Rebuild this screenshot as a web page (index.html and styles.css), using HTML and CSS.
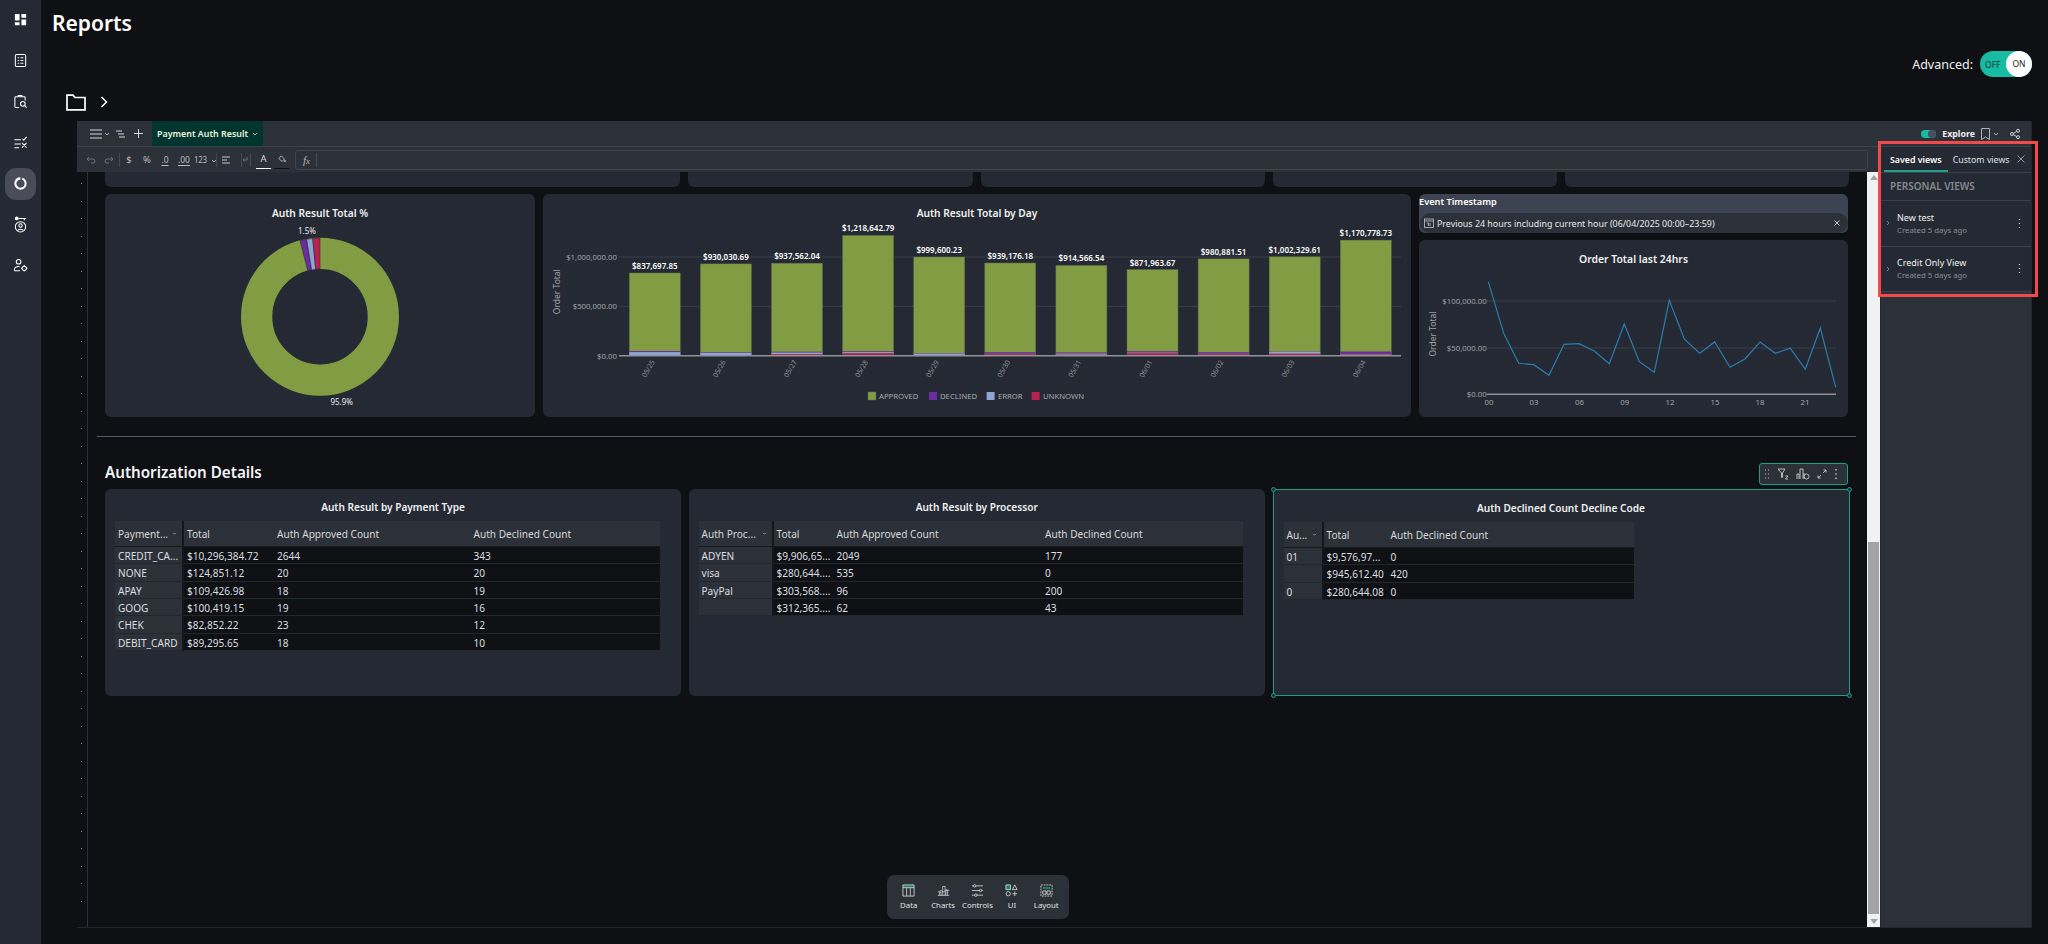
FILE: index.html
```html
<!DOCTYPE html>
<html lang="en">
<head>
<meta charset="utf-8">
<title>Reports</title>
<link rel="stylesheet" href="styles.css">
</head>
<body>
<aside class="sidebar">
  <div class="nav-item"><svg class="nav-icon" viewBox="0 0 16 16"><path class="fill" d="M2 2h5v7H2zM9 2h5v4H9zM9 8h5v6H9zM2 11h5v3H2z"/></svg></div>
  <div class="nav-item"><svg class="nav-icon" viewBox="0 0 16 16"><rect class="ln" x="2.5" y="1.5" width="11" height="13" rx="1.5"/><path class="ln" d="M5 5h1.5M8 5h3M5 8h1.5M8 8h3M5 11h1.5M8 11h3"/></svg></div>
  <div class="nav-item"><svg class="nav-icon" viewBox="0 0 16 16"><path class="ln" d="M6.5 14.5H3a1 1 0 0 1-1-1V4a1 1 0 0 1 1-1h9a1 1 0 0 1 1 1v3M5.5 3V1.500h4V3"/><circle class="ln" cx="10.500" cy="10.500" r="2.500"/><path class="ln" d="M12.500 12.500l2 2"/></svg></div>
  <div class="nav-item"><svg class="nav-icon" viewBox="0 0 16 16"><path class="ln" d="M1.500 5h7M1.500 9.500h7M1.500 13.500h5M10 4l1.500 1.500L14.500 2M9.500 8.500l5 5M14.500 8.500l-5 5"/></svg></div>
  <div class="nav-item active"><svg class="nav-icon" viewBox="0 0 16 16"><circle class="ring" cx="8" cy="8" r="5.500" pathLength="100" transform="rotate(-70 8 8)"/></svg></div>
  <div class="nav-item"><svg class="nav-icon tall" viewBox="0 0 16 18"><circle class="fill" cx="4" cy="2.500" r="2"/><path class="ln" d="M6 2.500h8M12 2.500v2"/><circle class="ln" cx="8" cy="11.500" r="5.500"/><circle class="ln" cx="8" cy="10" r="1.800"/><path class="ln" d="M5 15.500c.5-2 5.500-2 6 0"/></svg></div>
  <div class="nav-item"><svg class="nav-icon" viewBox="0 0 16 16"><circle class="ln" cx="6" cy="4" r="2.500"/><path class="ln" d="M1.500 13.500v-1c0-2 2-3.500 4.500-3.500h1M1.500 13.500h6"/><circle class="ln" cx="12" cy="11" r="2.300"/><path class="ln" d="M12 7.500v1.200M12 13.300v1.200M8.500 11h1.200M14.300 11h1.200"/></svg></div>
</aside>

<main class="main">
  <h1 class="page-title">Reports</h1>
  <div class="advanced-row">
    <span class="advanced-label">Advanced:</span>
    <div class="switch"><span class="switch-off">OFF</span><span class="switch-on">ON</span></div>
  </div>
  <div class="breadcrumb">
    <svg class="folder" viewBox="0 0 20 17"><path d="M1 15.800V1.200h6l2 2.300h10v12.300z"/></svg>
    <svg class="crumb-chevron" viewBox="0 0 8 12"><path d="M1.500 1l5 5-5 5"/></svg>
  </div>

  <section class="frame">
    <header class="toolbar-top">
      <div class="top-left">
        <svg class="ti ti-burger" viewBox="0 0 12 10"><path d="M0 1h12M0 5h12M0 9h12"/></svg>
        <svg class="ti ti-chev" viewBox="0 0 6 4"><path d="M1 1l2 2 2-2"/></svg>
        <svg class="ti ti-indent" viewBox="0 0 9 8"><path d="M0 1h6M2 4h6M3 7h6"/></svg>
        <svg class="ti ti-plus" viewBox="0 0 9 9"><path d="M4.500 0v9M0 4.500h9"/></svg>
        <div class="tab"><span>Payment Auth Result</span><svg class="ti ti-chev" viewBox="0 0 6 4"><path d="M1 1l2 2 2-2"/></svg></div>
      </div>
      <div class="top-right">
        <span class="mini-toggle"><span class="mini-knob"></span></span>
        <span class="explore">Explore</span>
        <svg class="ti ti-bookmark" viewBox="0 0 9 12"><path d="M.5.500h8v11L4.500 9l-4 2.500z"/></svg>
        <svg class="ti ti-chev" viewBox="0 0 6 4"><path d="M1 1l2 2 2-2"/></svg>
        <svg class="ti ti-share" viewBox="0 0 10 10"><circle cx="2" cy="5" r="1.500"/><circle cx="8" cy="1.800" r="1.500"/><circle cx="8" cy="8.200" r="1.500"/><path d="M3.500 4.300L6.600 2.500M3.500 5.700l3.100 1.800"/></svg>
      </div>
    </header>

    <div class="frame-body">
      <div class="work">
        <div class="toolbar-format">
          <svg class="fi" viewBox="0 0 10 8"><path d="M3 1L1 3l2 2M1 3h6a2 2 0 0 1 0 4H5"/></svg>
          <svg class="fi" viewBox="0 0 10 8"><path d="M7 1l2 2-2 2M9 3H3a2 2 0 0 0 0 4h2"/></svg>
          <i class="sep"></i>
          <span class="ft">$</span><span class="ft">%</span>
          <span class="ft ft-u">.0</span><span class="ft ft-u">.00</span>
          <span class="ft ft-num">123 <svg class="ti ti-chev" viewBox="0 0 6 4"><path d="M1 1l2 2 2-2"/></svg></span>
          <i class="sep"></i>
          <svg class="fi light fi-align" viewBox="0 0 10 8"><path d="M0 1h8M0 4h5M0 7h8"/></svg>
          <i class="sep"></i>
          <svg class="fi narrow" viewBox="0 0 6 8"><path d="M5 1v3H1l1.500-1.500M1 4l1.500 1.500"/></svg>
          <i class="sep"></i>
          <span class="ft ft-a">A</span>
          <span class="ft ft-fill"><svg class="fi light" viewBox="0 0 10 10"><path d="M4 1l4 4-3 3-4-3.500z"/><circle cx="8.500" cy="7.500" r="1"/></svg></span>
          <div class="formula"><span class="fx">f<small>x</small></span><i class="sep"></i></div>
        </div>

        <div class="canvas-wrap">
          <div class="ruler">
            <i></i><i></i><i></i><i></i><i></i><i></i><i></i><i></i><i></i><i></i><i></i><i></i><i></i><i></i><i></i><i></i><i></i><i></i><i></i><i></i><i></i><i></i><i></i><i></i><i></i><i></i><i></i><i></i><i></i><i></i><i></i><i></i><i></i><i></i><i></i><i></i><i></i><i></i><i></i><i></i><i></i><i></i>
          </div>
          <div class="canvas">
            <div class="row-clip">
              <div class="card"></div><div class="card"></div><div class="card"></div><div class="card"></div><div class="card"></div>
            </div>

            <div class="row-charts">
              <article class="card">
                <h3 class="card-title">Auth Result Total %</h3>
                <svg class="chart" viewBox="105 232 430 185">
                  <circle class="slice-a" cx="320" cy="316.700" r="63.350"/>
                  <polygon class="slice slice-d" points="300,240.500 306.700,239.300 311.700,270 307.700,270.700"/>
                  <polygon class="slice slice-e" points="306.700,239.300 312.700,238.500 315.700,269.300 311.700,270"/>
                  <polygon class="slice slice-u" points="312.700,238.500 320,238 320,269 315.700,269.300"/>
                  <text class="pct" x="307" y="234">1.5%</text>
                  <text class="pct" x="341.700" y="405">95.9%</text>
                </svg>
              </article>

              <article class="card">
                <h3 class="card-title">Auth Result Total by Day</h3>
                <svg class="chart" viewBox="543 232 868 185">
                  <path class="grid" d="M619 257H1401M619 306.300H1401"/>
                  <text class="axis end" x="617" y="260">$1,000,000.00</text>
                  <text class="axis end" x="617" y="309">$500,000.00</text>
                  <text class="axis end" x="617" y="358.700">$0.00</text>
                  <text class="axis-title" transform="translate(560 291.700) rotate(-90)">Order Total</text>

                  <g transform="translate(629.300 0)"><rect class="b-a" width="51" y="273" height="82.700"/><rect class="b-d" width="51" y="351" height="1.200"/><rect class="b-e" width="51" y="352.200" height="2.800"/><rect class="b-u" width="51" y="355" height=".7"/><text class="val" x="25.500" y="269">$837,697.85</text><text class="tick" transform="translate(21 370) rotate(-60)">05/25</text></g>
                  <g transform="translate(700.400 0)"><rect class="b-a" width="51" y="263.900" height="91.800"/><rect class="b-d" width="51" y="352.200" height=".7"/><rect class="b-e" width="51" y="352.900" height="2.500"/><rect class="b-u" width="51" y="355.400" height=".3"/><text class="val" x="25.500" y="259.900">$930,030.69</text><text class="tick" transform="translate(21 370) rotate(-60)">05/26</text></g>
                  <g transform="translate(771.500 0)"><rect class="b-a" width="51" y="263.200" height="92.500"/><rect class="b-d" width="51" y="351.700" height="1"/><rect class="b-e" width="51" y="352.700" height="1.500"/><rect class="b-u" width="51" y="354.200" height="1.500"/><text class="val" x="25.500" y="259.200">$937,562.04</text><text class="tick" transform="translate(21 370) rotate(-60)">05/27</text></g>
                  <g transform="translate(842.600 0)"><rect class="b-a" width="51" y="235.400" height="120.300"/><rect class="b-d" width="51" y="351.200" height="1"/><rect class="b-e" width="51" y="352.200" height="1"/><rect class="b-u" width="51" y="353.200" height="2.500"/><text class="val" x="25.500" y="231.400">$1,218,642.79</text><text class="tick" transform="translate(21 370) rotate(-60)">05/28</text></g>
                  <g transform="translate(913.700 0)"><rect class="b-a" width="51" y="257" height="98.700"/><rect class="b-d" width="51" y="353" height=".7"/><rect class="b-e" width="51" y="353.700" height="1.500"/><rect class="b-u" width="51" y="355.200" height=".5"/><text class="val" x="25.500" y="253">$999,600.23</text><text class="tick" transform="translate(21 370) rotate(-60)">05/29</text></g>
                  <g transform="translate(984.800 0)"><rect class="b-a" width="51" y="263" height="92.700"/><rect class="b-d" width="51" y="352.200" height="1.700"/><rect class="b-e" width="51" y="353.900" height=".3"/><rect class="b-u" width="51" y="354.200" height="1.500"/><text class="val" x="25.500" y="259">$939,176.18</text><text class="tick" transform="translate(21 370) rotate(-60)">05/30</text></g>
                  <g transform="translate(1055.900 0)"><rect class="b-a" width="51" y="265.400" height="90.300"/><rect class="b-d" width="51" y="352.400" height="1.300"/><rect class="b-e" width="51" y="353.700" height="1"/><rect class="b-u" width="51" y="354.700" height="1"/><text class="val" x="25.500" y="261.400">$914,566.54</text><text class="tick" transform="translate(21 370) rotate(-60)">05/31</text></g>
                  <g transform="translate(1127 0)"><rect class="b-a" width="51" y="269.600" height="86.100"/><rect class="b-d" width="51" y="351.200" height="1.500"/><rect class="b-e" width="51" y="352.700" height=".5"/><rect class="b-u" width="51" y="353.200" height="2.500"/><text class="val" x="25.500" y="265.600">$871,963.67</text><text class="tick" transform="translate(21 370) rotate(-60)">06/01</text></g>
                  <g transform="translate(1198.100 0)"><rect class="b-a" width="51" y="258.900" height="96.800"/><rect class="b-d" width="51" y="352.200" height="1.700"/><rect class="b-e" width="51" y="353.900" height=".3"/><rect class="b-u" width="51" y="354.200" height="1.500"/><text class="val" x="25.500" y="254.900">$980,881.51</text><text class="tick" transform="translate(21 370) rotate(-60)">06/02</text></g>
                  <g transform="translate(1269.200 0)"><rect class="b-a" width="51" y="256.800" height="98.900"/><rect class="b-d" width="51" y="351.200" height=".5"/><rect class="b-e" width="51" y="351.700" height="2"/><rect class="b-u" width="51" y="353.700" height="2"/><text class="val" x="25.500" y="252.800">$1,002,329.61</text><text class="tick" transform="translate(21 370) rotate(-60)">06/03</text></g>
                  <g transform="translate(1340.300 0)"><rect class="b-a" width="51" y="240.100" height="115.600"/><rect class="b-d" width="51" y="351.500" height="2.500"/><rect class="b-e" width="51" y="354" height=".5"/><rect class="b-u" width="51" y="354.500" height="1.200"/><text class="val" x="25.500" y="236.100">$1,170,778.73</text><text class="tick" transform="translate(21 370) rotate(-60)">06/04</text></g>
                  <path class="baseline" d="M619 355.700H1401"/>

                  <rect class="b-a" x="868" y="392" width="8" height="8"/><text class="legend" x="879" y="399">APPROVED</text>
                  <rect class="b-d" x="929" y="392" width="8" height="8"/><text class="legend" x="940" y="399">DECLINED</text>
                  <rect class="b-e" x="986.600" y="392" width="8" height="8"/><text class="legend" x="998" y="399">ERROR</text>
                  <rect class="b-u" x="1031.600" y="392" width="8" height="8"/><text class="legend" x="1043" y="399">UNKNOWN</text>
                </svg>
              </article>

              <div class="side-stack">
                <div class="filter">
                  <div class="filter-label">Event Timestamp</div>
                  <div class="filter-pill">
                    <svg class="cal" viewBox="0 0 10 10"><rect x=".5" y="1" width="9" height="8.500"/><path d="M.5 3h9M3 5h1.500v3M6 5v3"/></svg>
                    <span>Previous 24 hours including current hour (06/04/2025 00:00–23:59)</span>
                    <svg class="x" viewBox="0 0 6 6"><path d="M.5.500l5 5M5.500.500l-5 5"/></svg>
                  </div>
                </div>
                <article class="card line-card">
                  <h3 class="card-title">Order Total last 24hrs</h3>
                  <svg class="chart" viewBox="1419 278 429 139">
                    <path class="grid" d="M1487 301H1836M1487 348H1836"/>
                    <text class="axis end" x="1486.700" y="304">$100,000.00</text>
                    <text class="axis end" x="1486.700" y="351">$50,000.00</text>
                    <text class="axis end" x="1486.700" y="397.300">$0.00</text>
                    <text class="axis-title" transform="translate(1436 334) rotate(-90)">Order Total</text>
                    <path class="baseline" d="M1487 394.300H1836"/>
                    <polyline class="line" points="1488.300,281.700 1503.700,333.300 1518.700,363.300 1533.700,364.700 1549,375.300 1564,344.300 1579,343.700 1594.300,351 1609.300,363.700 1624.300,324 1639.300,361.700 1654.300,372.300 1669.300,300.300 1684.300,339 1699.700,353.300 1714.700,342 1730,367.300 1745,359 1760,342 1775.300,353.300 1790.300,348.300 1805.300,369.300 1820.300,328 1835.700,387.300"/>
                    <text class="axis mid" x="1489" y="405">00</text><text class="axis mid" x="1534" y="405">03</text><text class="axis mid" x="1579.500" y="405">06</text><text class="axis mid" x="1624.700" y="405">09</text><text class="axis mid" x="1670" y="405">12</text><text class="axis mid" x="1715" y="405">15</text><text class="axis mid" x="1760" y="405">18</text><text class="axis mid" x="1805" y="405">21</text>
                  </svg>
                </article>
              </div>
            </div>

            <hr class="section-rule">
            <h2 class="section-title">Authorization Details</h2>

            <div class="row-tables">
              <article class="card table-card">
                <h3 class="card-title small">Auth Result by Payment Type</h3>
                <div class="pivot p1">
                  <div class="hd frozen"><span>Payment...</span><svg class="ti ti-chev" viewBox="0 0 6 4"><path d="M1 1l2 2 2-2"/></svg></div><div class="hd">Total</div><div class="hd">Auth Approved Count</div><div class="hd">Auth Declined Count</div>
                  <div class="frozen">CREDIT_CA...</div><div>$10,296,384.72</div><div>2644</div><div>343</div>
                  <div class="frozen">NONE</div><div>$124,851.12</div><div>20</div><div>20</div>
                  <div class="frozen">APAY</div><div>$109,426.98</div><div>18</div><div>19</div>
                  <div class="frozen">GOOG</div><div>$100,419.15</div><div>19</div><div>16</div>
                  <div class="frozen">CHEK</div><div>$82,852.22</div><div>23</div><div>12</div>
                  <div class="frozen">DEBIT_CARD</div><div>$89,295.65</div><div>18</div><div>10</div>
                </div>
              </article>

              <article class="card table-card">
                <h3 class="card-title small">Auth Result by Processor</h3>
                <div class="pivot p2">
                  <div class="hd frozen"><span>Auth Proc...</span><svg class="ti ti-chev" viewBox="0 0 6 4"><path d="M1 1l2 2 2-2"/></svg></div><div class="hd">Total</div><div class="hd">Auth Approved Count</div><div class="hd">Auth Declined Count</div>
                  <div class="frozen">ADYEN</div><div>$9,906,65...</div><div>2049</div><div>177</div>
                  <div class="frozen">visa</div><div>$280,644....</div><div>535</div><div>0</div>
                  <div class="frozen">PayPal</div><div>$303,568....</div><div>96</div><div>200</div>
                  <div class="frozen"></div><div>$312,365....</div><div>62</div><div>43</div>
                </div>
              </article>

              <article class="card table-card selected">
                <div class="widget-tools">
                  <svg class="wt" viewBox="0 0 8 12"><path d="M2 2h1M5 2h1M2 6h1M5 6h1M2 10h1M5 10h1"/></svg>
                  <svg class="wt" viewBox="0 0 12 12"><path d="M1 1h7L5.500 5v4.500h-1V5zM8.500 8h2.500l-2.500 3h2.500"/></svg>
                  <svg class="wt" viewBox="0 0 14 12"><path d="M1 11V6h2v5M4 11V1h3v10M8 11V5"/><circle cx="10.500" cy="8.500" r="2.500"/></svg>
                  <svg class="wt" viewBox="0 0 10 12"><path d="M1 10l3-3M6 5l3-3M6.500 2H9v2.500M1 7.500V10h2.500"/></svg>
                  <svg class="wt kebab" viewBox="0 0 4 12"><path d="M2 1v1.500M2 5.200v1.500M2 9.500V11"/></svg>
                </div>
                <i class="handle tl"></i><i class="handle tr"></i><i class="handle bl"></i><i class="handle br"></i>
                <h3 class="card-title small">Auth Declined Count Decline Code</h3>
                <div class="pivot p3">
                  <div class="hd frozen"><span>Au...</span><svg class="ti ti-chev" viewBox="0 0 6 4"><path d="M1 1l2 2 2-2"/></svg></div><div class="hd">Total</div><div class="hd">Auth Declined Count</div>
                  <div class="frozen">01</div><div>$9,576,97...</div><div>0</div>
                  <div class="frozen"></div><div>$945,612.40</div><div>420</div>
                  <div class="frozen">0</div><div>$280,644.08</div><div>0</div>
                </div>
              </article>
            </div>

            <nav class="dock">
              <div class="dock-item"><svg class="dock-icon" viewBox="0 0 14 14"><rect class="teal" x="1" y="1" width="12" height="3"/><path d="M1 1h12v12H1zM1 4h12M5 4v9M9 4v9"/></svg><span>Data</span></div>
              <div class="dock-item"><svg class="dock-icon" viewBox="0 0 16 14"><path d="M1 13h14M3 13V9h2v4M7 13V2h3v11M11 13V7h2v6M1 9l4-2 3 2 3-3 4 1"/></svg><span>Charts</span></div>
              <div class="dock-item"><svg class="dock-icon" viewBox="0 0 14 14"><path d="M1 2h2M5.500 2H13M1 7h8M11.500 7H13M1 12h3M6.500 12H13"/><circle cx="4" cy="2" r="1.300"/><circle cx="10.200" cy="7" r="1.300"/><circle cx="5.200" cy="12" r="1.300"/></svg><span>Controls</span></div>
              <div class="dock-item"><svg class="dock-icon" viewBox="0 0 14 14"><rect class="teal" x="1" y="1" width="5" height="5"/><path d="M1 1h5v5H1zM10.500 1l2.500 5H8z"/><circle cx="3.500" cy="10.500" r="2.300"/><path d="M10.500 8v5M8 10.500h5"/></svg><span>UI</span></div>
              <div class="dock-item"><svg class="dock-icon" viewBox="0 0 14 14"><path class="dash" d="M1 1h12v12H1z"/><rect class="teal" x="3" y="3" width="8" height="2.500"/><path d="M3 7.500h3.500v3.500H3zM7.500 7.500H11v3.500H7.500z"/></svg><span>Layout</span></div>
            </nav>
          </div>
          <div class="scrollbar">
            <i class="arrow up"></i>
            <div class="track"><div class="thumb"></div></div>
            <i class="arrow down"></i>
          </div>
        </div>
      </div>

      <aside class="views">
        <div class="views-tabs">
          <span class="vtab on">Saved views</span>
          <span class="vtab">Custom views</span>
          <svg class="vclose" viewBox="0 0 8 8"><path d="M.5.500l7 7M7.500.500l-7 7"/></svg>
        </div>
        <div class="views-head">PERSONAL VIEWS</div>
        <div class="view-item">
          <svg class="vchev" viewBox="0 0 4 6"><path d="M1 1l2 2-2 2"/></svg>
          <div class="view-text"><div class="view-name">New test</div><div class="view-sub">Created 5 days ago</div></div>
          <svg class="vkebab" viewBox="0 0 3 11"><path d="M1.500 1v1M1.500 5v1M1.500 9v1"/></svg>
        </div>
        <div class="view-item">
          <svg class="vchev" viewBox="0 0 4 6"><path d="M1 1l2 2-2 2"/></svg>
          <div class="view-text"><div class="view-name">Credit Only View</div><div class="view-sub">Created 5 days ago</div></div>
          <svg class="vkebab" viewBox="0 0 3 11"><path d="M1.500 1v1M1.500 5v1M1.500 9v1"/></svg>
        </div>
      </aside>
      <div class="annotation"></div>
    </div>
  </section>
</main>
</body>
</html>
```

FILE: styles.css
```css
* { box-sizing: border-box; }
html, body { margin: 0; padding: 0; height: 944px; overflow: hidden; }
body { display: flex; background: #0e1014; color: #fff; font-family: "Noto Sans", "Open Sans", sans-serif; }

.sidebar { width: 41px; flex: none; height: 944px; background: #252933; padding-top: 3.500px; display: flex; flex-direction: column; align-items: center; gap: 9px; }
.nav-item { width: 31px; height: 32px; display: flex; align-items: center; justify-content: center; border-radius: 11px; }
.nav-item.active { background: #4a4d57; }
.nav-icon { width: 15px; height: 15px; }
.nav-icon.tall { height: 17px; }
.nav-icon .fill { fill: #fff; }
.nav-icon .ln { fill: none; stroke: #fff; stroke-width: 1.100; }
.nav-icon .ring { fill: none; stroke: #fff; stroke-width: 2.200; stroke-dasharray: 94 6; }

.main { flex: 1; min-width: 0; padding-right: 16px; display: flex; flex-direction: column; }
.page-title { margin: 0 0 0 11px; height: 46px; font-size: 21px; line-height: 46px; font-weight: 600; }
.advanced-row { margin-top: 5px; height: 26px; display: flex; justify-content: flex-end; align-items: center; gap: 7px; }
.advanced-label { font-size: 12.500px; color: #f0f0f0; }
.switch { width: 52px; height: 26px; border-radius: 13px; background: #17bba1; position: relative; display: flex; align-items: center; font-size: 8.500px; color: #12352f; }
.switch-off { margin-left: 5px; width: 21px; }
.switch-on { width: 26px; height: 26px; border-radius: 13px; background: #fff; text-align: center; line-height: 26px; color: #222; }

.breadcrumb { height: 44px; padding: 17px 0 0 25px; display: flex; align-items: flex-start; gap: 14px; }
.folder { width: 20px; height: 17px; fill: none; stroke: #fff; stroke-width: 1.700; }
.crumb-chevron { width: 8px; height: 12px; margin-top: 2px; fill: none; stroke: #fff; stroke-width: 1.500; }

.frame { margin-left: 36px; height: 807px; display: flex; flex-direction: column; position: relative; border-bottom: 1px solid #23262d; border-right: 1px solid #23262d; }
.toolbar-top { height: 26px; flex: none; background: #2c3038; border-bottom: 1px solid #3c4049; display: flex; justify-content: space-between; }
.top-left { display: flex; align-items: center; padding-left: 13px; }
.ti { fill: none; stroke: #d5d7da; stroke-width: 1; flex: none; }
.ti-burger { width: 12px; height: 10px; }
.ti-chev { width: 6px; height: 4px; stroke: #aeb1b5; margin-left: 2px; }
.ti-indent { width: 9px; height: 8px; margin-left: 6px; stroke-width: 1; }
.ti-plus { width: 9px; height: 9px; margin-left: 9px; }
.tab { margin-left: 9px; width: 111px; height: 25px; background: #01352f; display: flex; align-items: center; padding-left: 5px; font-size: 8.900px; font-weight: 600; color: #eef3df; white-space: nowrap; }
.tab .ti-chev { margin-left: 4px; }
.top-right { display: flex; align-items: center; padding-right: 11px; }
.mini-toggle { width: 15px; height: 8px; background: #17bba1; border-radius: 4px; position: relative; }
.mini-knob { position: absolute; right: 0; top: 0; width: 8px; height: 8px; border-radius: 4px; background: #4a4f5c; }
.explore { font-size: 8.800px; font-weight: 700; color: #eee; margin-left: 6px; }
.ti-bookmark { width: 9px; height: 12px; margin-left: 6px; stroke: #aeb1b5; }
.top-right .ti-chev { margin-left: 3px; }
.ti-share { width: 10px; height: 10px; margin-left: 11px; }

.frame-body { flex: 1; min-height: 0; display: flex; position: relative; }
.work { width: 1803px; flex: none; display: flex; flex-direction: column; }
.toolbar-format { height: 25px; flex: none; background: #2c3038; display: flex; align-items: center; padding-left: 9px; }
.fi { width: 10px; height: 8px; fill: none; stroke: #73777e; stroke-width: .9; flex: none; margin-right: 8px; }
.fi.light { stroke: #d5d7da; }
.fi-align { margin-left: 5px; margin-right: 12px; }
.fi.narrow { width: 6px; margin-right: 5px; }
.sep { width: 1px; height: 14px; background: #444851; flex: none; }
.toolbar-format > .sep { margin: 0 0 0 -3px; }
.ft { font-size: 9.500px; color: #b8babd; flex: none; width: 18px; text-align: center; }
.ft-u { text-decoration: underline; text-underline-offset: 2px; width: 18px; font-size: 8.500px; }
.ft-u + .ft-u { width: 20px; }
.ft-num { width: 22px; font-size: 8px; white-space: nowrap; margin-right: 3px; letter-spacing: -.3px; }
.ft-a { width: 15px; margin: 0 3px 0 5px; height: 18px; line-height: 16px; border-bottom: 1px solid #fff; color: #d5d7da; }
.ft-fill { width: 15px; margin-right: 6px; height: 18px; border-bottom: 1px solid #0e1014; display: flex; align-items: center; justify-content: center; }
.ft-fill .fi { margin: 0; }
.formula { flex: 1; height: 20px; margin-right: 12px; border: 1px solid #40444d; border-radius: 3px; display: flex; align-items: center; padding-left: 7px; gap: 6px; }
.fx { font-size: 11px; font-style: italic; color: #b8babd; font-family: "Liberation Serif", serif; }
.fx small { font-size: 9px; }

.canvas-wrap { flex: 1; min-height: 0; display: flex; position: relative; }
.ruler { width: 11px; flex: none; border-right: 1px solid #2c3038; padding-top: 11px; display: flex; flex-direction: column; gap: 16.500px; overflow: hidden; align-items: flex-start; padding-left: 4px; }
.ruler i { width: 1px; height: 1px; background: #80848a; flex: none; }
.canvas { width: 1779px; flex: none; padding-left: 17px; position: relative; overflow: hidden; }

.card { background: #252933; border-radius: 6px; }
.row-clip { display: grid; grid-template-columns: 575px 285px 284px 284px 284px; column-gap: 8px; height: 15px; }
.row-clip .card { border-radius: 0 0 6px 6px; }
.row-charts { display: grid; grid-template-columns: 430px 868px 429px; column-gap: 8px; height: 223px; margin-top: 7px; }
.card-title { margin: 0; height: 38px; line-height: 38px; font-size: 10.200px; font-weight: 600; text-align: center; color: #f0f1f2; }
.chart { display: block; width: 100%; overflow: visible; }
.row-charts > .card > .chart { height: 185px; }

.slice-a { fill: none; stroke: #829c44; stroke-width: 31.300; }
.slice { stroke: #1f2229; stroke-width: .5; }
.slice-d, .b-d { fill: #6a2d9f; }
.slice-e, .b-e { fill: #8ea3d8; }
.slice-u, .b-u { fill: #b6234f; }
.b-a { fill: #829c44; stroke: #5d6a4a; stroke-width: .5; }
.pct { font-size: 8px; fill: #e8e9ea; text-anchor: middle; }
.grid { stroke: #3b3f4a; stroke-width: 1; fill: none; }
.baseline { stroke: #8e9197; stroke-width: 1.500; fill: none; }
.axis { font-size: 7.800px; fill: #a2a5aa; }
.axis.end { text-anchor: end; }
.axis.mid { text-anchor: middle; }
.axis-title { font-size: 8.500px; fill: #a2a5aa; text-anchor: middle; }
.val { font-size: 8px; font-weight: 600; fill: #fff; text-anchor: middle; }
.tick { font-size: 7px; fill: #8e9197; text-anchor: middle; }
.legend { font-size: 7.700px; fill: #a8abb0; }
.line { fill: none; stroke: #2b7db0; stroke-width: 1.200; }

.side-stack { display: flex; flex-direction: column; gap: 7px; }
.filter { height: 39px; background: #3d4352; border-radius: 6px; display: flex; flex-direction: column; }
.filter-label { height: 19px; line-height: 16px; font-size: 9.200px; font-weight: 600; color: #fff; white-space: nowrap; }
.filter-pill { height: 20px; background: #2c3038; border-radius: 10px; margin: 0 0 0 1px; display: flex; align-items: center; padding: 0 8px 0 4px; font-size: 8.900px; color: #e8e9ea; white-space: nowrap; }
.cal { width: 10px; height: 10px; margin-right: 3px; fill: none; stroke: #c2c4c8; stroke-width: .8; }
.filter-pill .x { width: 6px; height: 6px; margin-left: auto; fill: none; stroke: #c2c4c8; stroke-width: 1; }
.line-card { height: 177px; }
.line-card .card-title { font-size: 10.400px; }
.line-card .chart { height: 139px; }

.section-rule { margin: 19px 0 0 -8px; width: 1759px; height: 1px; border: 0; background: #565a63; }
.section-title { margin: 0; height: 52px; padding-top: 18px; font-size: 15.200px; line-height: 34px; font-weight: 600; color: #f3f4f5; }

.row-tables { display: grid; grid-template-columns: 576px 576.500px 577px; column-gap: 7.500px; height: 207px; }
.table-card { padding-top: 0; position: relative; }
.card-title.small { height: 32px; line-height: 36px; font-size: 10.100px; }
.pivot { display: grid; grid-auto-rows: 17.330px; grid-template-rows: 26px; font-size: 10.100px; color: #dcdee0; }
.pivot > div { background: #0f1115; border-bottom: 1px solid #23262d; line-height: 18px; padding-left: 3px; white-space: nowrap; overflow: hidden; }
.pivot > .hd { background: #2c3038; line-height: 26px; border-bottom: 1.300px solid #17191e; color: #d6d8da; }
.pivot > .frozen { background: #2c3038; border-right: 2px solid #14161b; }
.pivot > .hd.frozen { display: flex; align-items: center; justify-content: space-between; padding-right: 5px; }
.hd .ti-chev { width: 5px; height: 3px; margin-left: 3px; }
.p1 { margin: 0 21px 0 10px; grid-template-columns: 69px 90px 196.500px 189.500px; }
.p2 { margin: 0 21px 0 10px; grid-template-columns: 75px 60px 208.500px 201px; }
.p3 { margin: 0 0 0 10px; width: 350px; grid-template-columns: 40px 64px 246px; }

.selected { border: 1px solid #16a088; border-radius: 0; }
.handle { position: absolute; width: 5px; height: 5px; border: 1px solid #16a088; border-radius: 50%; background: #252933; }
.tl { left: -3px; top: -3px; } .tr { right: -3px; top: -3px; } .bl { left: -3px; bottom: -3px; } .br { right: -3px; bottom: -3px; }
.widget-tools { position: absolute; right: 1px; top: -27px; width: 89px; height: 22px; background: #2c3038; border: 1px solid #16a088; border-radius: 3px; display: flex; align-items: center; padding-left: 3px; gap: 6.750px; }
.wt { height: 12px; width: auto; fill: none; stroke: #b7babd; stroke-width: 1; flex: none; }
.wt.kebab { stroke: #d5d7da; stroke-width: 1.300; }

.dock { position: absolute; left: 799px; top: 703px; width: 182px; height: 44px; background: #2c3038; border-radius: 7px; display: flex; padding: 9px 0 0 4.500px; }
.dock-item { width: 34.400px; display: flex; flex-direction: column; align-items: center; font-size: 7.800px; color: #e0e2e4; white-space: nowrap; gap: 3px; }
.dock-icon { width: 13px; height: 13px; fill: none; stroke: #d7d9dc; stroke-width: .9; flex: none; }
.dock-icon .teal { fill: #1c7f70; stroke: none; }
.dock-icon .dash { stroke-dasharray: 2 1; }

.scrollbar { width: 13px; flex: none; background: #f1f1f1; display: flex; flex-direction: column; align-items: center; }
.arrow { width: 0; height: 0; border-left: 4px solid transparent; border-right: 4px solid transparent; flex: none; margin: 3px 0; }
.arrow.up { border-bottom: 5px solid #a3a3a3; }
.arrow.down { border-top: 5px solid #a3a3a3; }
.track { flex: 1; width: 100%; position: relative; }
.thumb { position: absolute; left: 1px; right: 1px; top: 359px; height: 372px; background: #a3a3a3; }

.views { flex: 1; background: #2c3038; border-left: 1px solid #23262d; }
.views-tabs { height: 26px; background: #252933; border-bottom: 1px solid #3c4049; display: flex; align-items: center; position: relative; padding-left: 9px; gap: 11px; font-size: 8.800px; }
.vtab { color: #dfe1e3; white-space: nowrap; }
.vtab.on { font-weight: 600; color: #fff; position: relative; }
.vtab.on::after { content: ""; position: absolute; left: -6px; right: -6px; bottom: -6px; height: 1.500px; background: #1fa08c; }
.vclose { position: absolute; left: 136px; top: 8px; width: 8px; height: 8px; stroke: #b7babd; stroke-width: .8; fill: none; }
.views-head { height: 28px; background: #252933; border-bottom: 1px solid #3c4049; padding-left: 9px; line-height: 27px; font-size: 10px; font-weight: 600; color: #85888e; white-space: nowrap; }
.view-item { height: 45.500px; background: #252933; border-bottom: 1px solid #3c4049; display: flex; align-items: center; padding: 0 10px 0 5px; }
.vchev { width: 4px; height: 6px; fill: none; stroke: #7d8086; stroke-width: 1; flex: none; }
.view-text { flex: 1; margin-left: 7px; }
.view-name { font-size: 9px; line-height: 13px; color: #f0f1f2; white-space: nowrap; }
.view-sub { font-size: 7.800px; line-height: 12px; color: #8c8f94; white-space: nowrap; }
.vkebab { width: 3px; height: 11px; stroke: #d5d7da; stroke-width: 1.200; fill: none; flex: none; }

.annotation { position: absolute; left: 1801px; top: -6px; width: 160px; height: 156px; border: 3px solid #f24a4a; pointer-events: none; }
```
